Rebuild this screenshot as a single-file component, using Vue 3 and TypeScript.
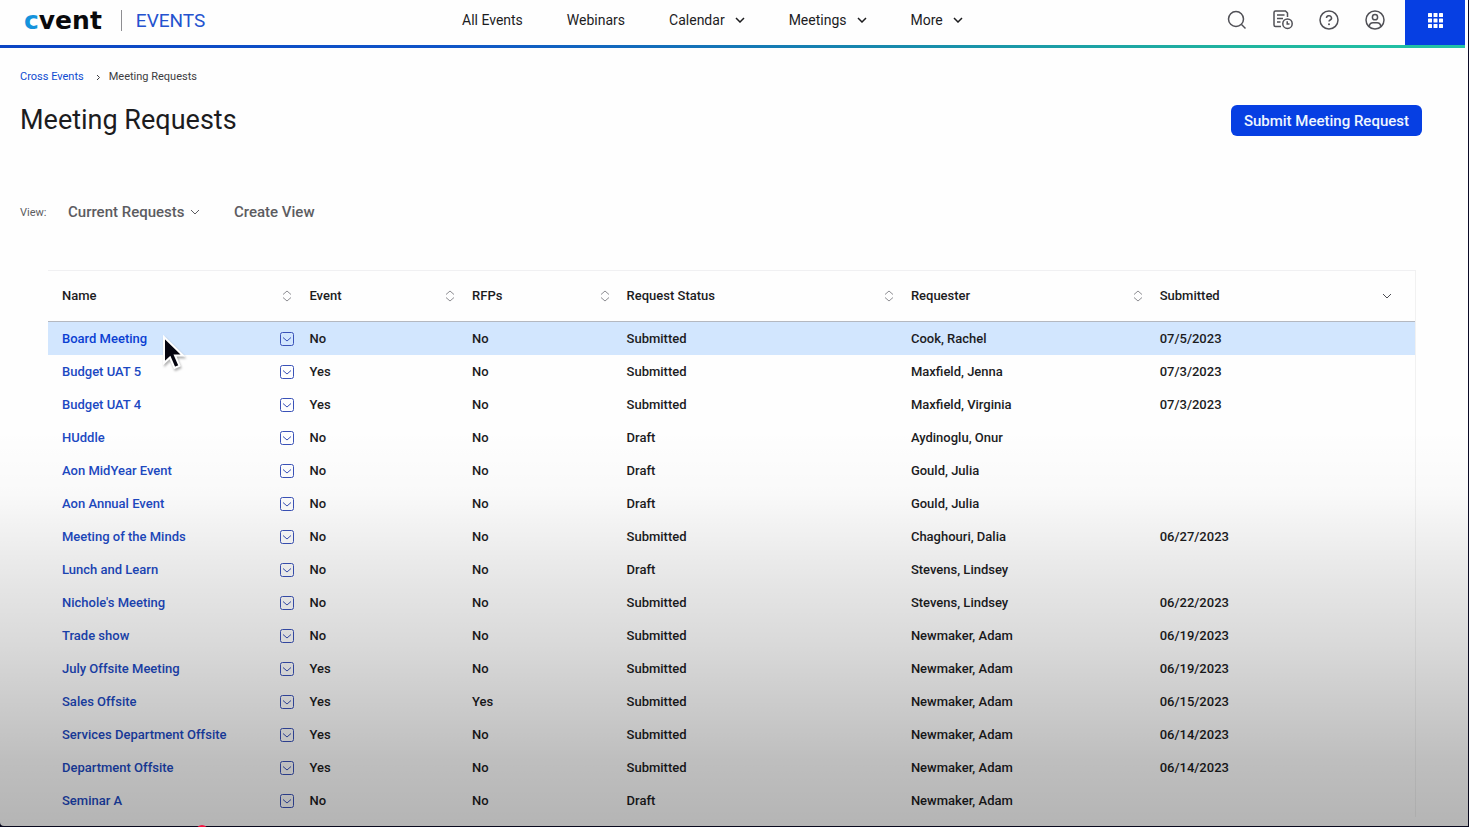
<script setup lang="ts">
import { ref } from 'vue'

interface NavItem {
  label: string
  menu: boolean
}

interface MeetingRequest {
  name: string
  event: string
  rfps: string
  status: string
  requester: string
  submitted: string
}

const navItems: NavItem[] = [
  { label: 'All Events', menu: false },
  { label: 'Webinars', menu: false },
  { label: 'Calendar', menu: true },
  { label: 'Meetings', menu: true },
  { label: 'More', menu: true },
]

const columns: string[] = ['Name', 'Event', 'RFPs', 'Request Status', 'Requester', 'Submitted']

const row = (
  name: string,
  event: string,
  rfps: string,
  status: string,
  requester: string,
  submitted = '',
): MeetingRequest => ({ name, event, rfps, status, requester, submitted })

const requests: MeetingRequest[] = [
  row('Board Meeting', 'No', 'No', 'Submitted', 'Cook, Rachel', '07/5/2023'),
  row('Budget UAT 5', 'Yes', 'No', 'Submitted', 'Maxfield, Jenna', '07/3/2023'),
  row('Budget UAT 4', 'Yes', 'No', 'Submitted', 'Maxfield, Virginia', '07/3/2023'),
  row('HUddle', 'No', 'No', 'Draft', 'Aydinoglu, Onur'),
  row('Aon MidYear Event', 'No', 'No', 'Draft', 'Gould, Julia'),
  row('Aon Annual Event', 'No', 'No', 'Draft', 'Gould, Julia'),
  row('Meeting of the Minds', 'No', 'No', 'Submitted', 'Chaghouri, Dalia', '06/27/2023'),
  row('Lunch and Learn', 'No', 'No', 'Draft', 'Stevens, Lindsey'),
  row("Nichole's Meeting", 'No', 'No', 'Submitted', 'Stevens, Lindsey', '06/22/2023'),
  row('Trade show', 'No', 'No', 'Submitted', 'Newmaker, Adam', '06/19/2023'),
  row('July Offsite Meeting', 'Yes', 'No', 'Submitted', 'Newmaker, Adam', '06/19/2023'),
  row('Sales Offsite', 'Yes', 'Yes', 'Submitted', 'Newmaker, Adam', '06/15/2023'),
  row('Services Department Offsite', 'Yes', 'No', 'Submitted', 'Newmaker, Adam', '06/14/2023'),
  row('Department Offsite', 'Yes', 'No', 'Submitted', 'Newmaker, Adam', '06/14/2023'),
  row('Seminar A', 'No', 'No', 'Draft', 'Newmaker, Adam'),
]

const activeRow = ref(0)
const view = ref('current')
</script>

<template>
  <div class="frame">
    <div class="page">
      <header class="topbar">
        <div class="brand">
          <a class="logo" href="#"><span class="logo-c">c</span>vent</a>
          <span class="divider"></span>
          <a class="product" href="#">EVENTS</a>
        </div>
        <nav class="nav">
          <template v-for="item in navItems" :key="item.label">
            <button v-if="item.menu" class="nav-item" type="button">
              {{ item.label }}
              <svg class="nav-chevron" width="10" height="6" viewBox="0 0 10 6"><path d="M1 1l4 4 4-4" /></svg>
            </button>
            <a v-else class="nav-item" href="#">{{ item.label }}</a>
          </template>
        </nav>
        <div class="tools">
          <button class="tool" type="button" aria-label="Search">
            <svg width="20" height="20" viewBox="0 0 20 20"><circle cx="9" cy="9" r="7.5" /><path d="M14.5 14.5l4 4" /></svg>
          </button>
          <button class="tool" type="button" aria-label="Recent items">
            <svg width="20" height="20" viewBox="0 0 20 20">
              <path d="M8 16.500H2.500a1.500 1.500 0 0 1-1.500-1.500V2.500a1.500 1.500 0 0 1 1.500-1.500h10l2 2v4M4 5h7.500M4 8.500h6M4 12h3.500" />
              <circle cx="14.500" cy="13.700" r="4.700" />
              <path d="M14.200 11.200v2.800h2.300" />
            </svg>
          </button>
          <button class="tool" type="button" aria-label="Help">
            <svg width="20" height="20" viewBox="0 0 20 20">
              <circle cx="10" cy="10" r="9" />
              <path d="M7.500 8a2.500 2.300 0 1 1 3.700 2c-.8.400-1.200.8-1.200 1.600" />
              <circle class="dot" cx="10" cy="14.300" r="1" />
            </svg>
          </button>
          <button class="tool" type="button" aria-label="Account">
            <svg width="20" height="20" viewBox="0 0 20 20">
              <circle cx="10" cy="10" r="9" />
              <circle cx="10" cy="7.200" r="2.600" />
              <path d="M4.200 16.500c.3-2.500 1.800-3.700 3.800-3.700h4c2 0 3.500 1.200 3.800 3.700" />
            </svg>
          </button>
          <button class="apps" type="button" aria-label="Applications">
            <svg width="15" height="15" viewBox="0 0 15 15">
              <template v-for="y in 3" :key="y">
                <rect v-for="x in 3" :key="x" :x="(x - 1) * 5.5" :y="(y - 1) * 5.5" width="4" height="4" rx="0.5" />
              </template>
            </svg>
          </button>
        </div>
      </header>

      <main class="content">
        <nav class="crumbs" aria-label="Breadcrumb">
          <a href="#">Cross Events</a>
          <svg width="5" height="7" viewBox="0 0 5 7"><path d="M1 1l2.500 2.500L1 6" /></svg>
          <span>Meeting Requests</span>
        </nav>

        <div class="title-row">
          <h1>Meeting Requests</h1>
          <button class="submit" type="button">Submit Meeting Request</button>
        </div>

        <div class="view-row">
          <label for="view">View:</label>
          <div class="picker">
            <select id="view" v-model="view">
              <option value="current">Current Requests</option>
            </select>
            <svg width="10" height="6" viewBox="0 0 10 6"><path d="M1 1l4 4 4-4" /></svg>
          </div>
          <button class="create" type="button">Create View</button>
        </div>

        <table class="requests">
          <colgroup>
            <col class="c-name" />
            <col class="c-event" />
            <col class="c-rfps" />
            <col class="c-status" />
            <col class="c-requester" />
            <col />
          </colgroup>
          <thead>
            <tr>
              <th v-for="(column, i) in columns" :key="column" scope="col">
                <button class="sort" type="button">
                  <span>{{ column }}</span>
                  <svg v-if="i < columns.length - 1" width="16" height="12" viewBox="0 0 16 12">
                    <path d="M4 4.500L8 1l4 3.500M4 7.500L8 11l4-3.500" />
                  </svg>
                  <svg v-else class="sorted" width="16" height="12" viewBox="0 0 16 12"><path d="M4 4l4 4 4-4" /></svg>
                </button>
              </th>
            </tr>
          </thead>
          <tbody>
            <tr v-for="(r, i) in requests" :key="r.name" :class="{ active: i === activeRow }" @mouseenter="activeRow = i">
              <td>
                <div class="name-cell">
                  <a href="#">{{ r.name }}</a>
                  <button class="row-menu" type="button" :aria-label="`Actions for ${r.name}`">
                    <svg width="16" height="16" viewBox="0 0 16 16">
                      <rect x="1.500" y="1.500" width="13" height="13" rx="2" />
                      <path d="M4 6.500L8 10l4-3.500" />
                    </svg>
                  </button>
                </div>
              </td>
              <td>{{ r.event }}</td>
              <td>{{ r.rfps }}</td>
              <td>{{ r.status }}</td>
              <td>{{ r.requester }}</td>
              <td>{{ r.submitted }}</td>
            </tr>
          </tbody>
        </table>
      </main>
    </div>

    <div class="shade"></div>
    <span class="playhead"></span>
    <svg class="pointer" width="26" height="38" viewBox="0 0 26 38">
      <path d="M4 3v26l6-5.500 4.500 10.500 5-2.200L15 21.500h8z" />
    </svg>
  </div>
</template>

<style>
body {
  margin: 0;
  background: #0b0b28;
}
</style>

<style scoped>
.frame {
  position: relative;
  box-sizing: border-box;
  min-height: 100vh;
  padding: 0 1px 1px 0;
  display: flex;
  overflow: hidden;
  background: #0b0b28;
  color: #1c1c1e;
  font-family: Roboto, 'Liberation Sans', sans-serif;
}

.page {
  flex: 1;
  min-width: 0;
  background: #fefefe;
  border-bottom-left-radius: 4px;
}

button,
select {
  margin: 0;
  padding: 0;
  border: 0;
  background: none;
  color: inherit;
  font: inherit;
}

a {
  color: inherit;
  text-decoration: none;
}

svg {
  flex: none;
  fill: none;
  stroke: currentColor;
}

.topbar {
  display: grid;
  grid-template-columns: 462px 1fr auto;
  height: 45px;
  margin-right: 3px;
  border-bottom: 3px solid;
  border-image: linear-gradient(90deg, #0b45c4, #0f54c8 30%, #1788ad 60%, #20b59f 85%, #22c3a6) 1;
}

.brand {
  display: flex;
  align-items: center;
  height: 40px;
  padding-left: 24px;
}

.logo {
  padding-top: 1px;
  color: #0a0a0c;
  font: bold 25px/30px 'DejaVu Sans', sans-serif;
}

.logo-c {
  color: #1493dc;
}

.divider {
  width: 1px;
  height: 21px;
  margin: 0 14px 0 19px;
  background: #8e8e92;
}

.product {
  color: #2452cf;
  font-size: 19px;
}

.nav {
  display: flex;
  align-items: center;
  gap: 44px;
  height: 40px;
}

.nav-item {
  display: flex;
  align-items: center;
  gap: 10px;
  font-size: 14px;
  line-height: 20px;
  white-space: nowrap;
}

.nav-chevron {
  stroke-width: 1.5;
}

.tools {
  display: flex;
}

.tool {
  display: grid;
  place-items: center;
  width: 20px;
  height: 40px;
  margin-right: 26px;
  color: #505056;
}

.tool svg {
  stroke-width: 1.5;
}

.tool .dot {
  fill: currentColor;
  stroke: none;
}

.tool:nth-child(4) {
  margin-right: 20px;
}

.apps {
  width: 60px;
  height: 45px;
  padding-bottom: 5px;
  display: grid;
  place-items: center;
  background: #063fe3;
  color: #fff;
}

.apps svg {
  fill: currentColor;
  stroke: none;
}

.content {
  padding: 20px 46px 9px 20px;
}

.crumbs {
  display: flex;
  align-items: center;
  font-size: 11px;
  line-height: 18px;
  color: #3c3c40;
}

.crumbs a {
  color: #0f4bd0;
}

.crumbs svg {
  margin: 0 8px 0 12px;
}

.title-row {
  display: flex;
  align-items: center;
  justify-content: space-between;
  margin-top: 19px;
}

h1 {
  margin: 0;
  font-size: 27px;
  font-weight: 400;
  line-height: 31px;
}

.submit {
  height: 31px;
  padding: 0 13px;
  border-radius: 6px;
  background: #063fe3;
  color: #eef6ff;
  font-size: 15px;
  font-weight: 500;
}

.view-row {
  display: flex;
  align-items: center;
  height: 24px;
  margin-top: 64px;
  font-size: 15px;
  font-weight: 500;
  color: #5c5c61;
}

.view-row label {
  width: 48px;
  font-size: 11px;
  font-weight: 400;
}

.picker {
  display: flex;
  align-items: center;
  gap: 5px;
  margin-right: 34px;
}

.picker select {
  appearance: none;
  height: 24px;
}

.requests {
  width: calc(100% - 34px);
  margin: 46px 0 0 28px;
  border-collapse: separate;
  border-spacing: 0;
  table-layout: fixed;
  border-top: 1px solid #f0f0f2;
  border-right: 1px solid rgba(0, 0, 0, 0.05);
  font-size: 13px;
  font-weight: 500;
  line-height: 16px;
}

.c-name {
  width: 18.1%;
}

.c-event {
  width: 11.9%;
}

.c-rfps {
  width: 11.3%;
}

.c-status {
  width: 20.8%;
}

.c-requester {
  width: 18.2%;
}

th,
td {
  padding: 0 0 0 14px;
  text-align: left;
}

th {
  height: 50px;
  border-bottom: 1px solid #b4b8c0;
  font-weight: 500;
}

th:last-child {
  padding-right: 20px;
}

.sort {
  display: flex;
  align-items: center;
  justify-content: space-between;
  width: 100%;
}

.sort svg {
  color: #8d8d92;
}

.sort .sorted {
  color: #4c4c52;
}

td {
  height: 33px;
}

.active td {
  background: #d2e6fe;
}

.name-cell {
  display: flex;
  align-items: center;
  justify-content: space-between;
  color: #1c49c2;
}

.active .name-cell {
  color: #0b3fd2;
}

.row-menu {
  display: grid;
  height: 16px;
}

.row-menu svg {
  color: #3a52b8;
}

.shade {
  position: absolute;
  inset: auto 0 0 0;
  height: 48%;
  pointer-events: none;
  background: linear-gradient(
    rgba(0, 0, 0, 0),
    rgba(0, 0, 0, 0.02) 16%,
    rgba(0, 0, 0, 0.08) 33%,
    rgba(0, 0, 0, 0.15) 55%,
    rgba(0, 0, 0, 0.25) 83%,
    rgba(0, 0, 0, 0.29)
  );
}

.pointer {
  position: absolute;
  left: 160px;
  top: 334px;
  pointer-events: none;
  filter: drop-shadow(1px 2px 1px rgba(0, 0, 0, 0.3));
}

.pointer path {
  fill: #050510;
  stroke: #fff;
  stroke-width: 2;
}

.playhead {
  position: absolute;
  left: 196px;
  bottom: -10px;
  width: 12px;
  height: 12px;
  border-radius: 50%;
  background: #f5123f;
}
</style>
